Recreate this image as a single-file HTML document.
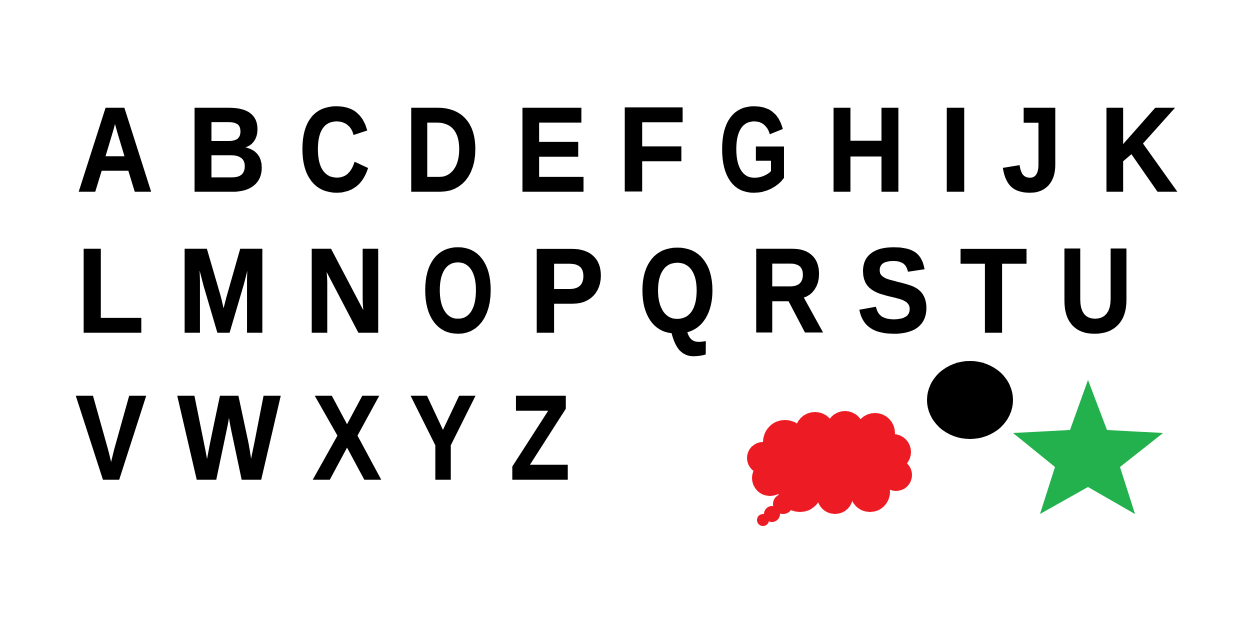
<!DOCTYPE html>
<html><head><style>
html,body{margin:0;padding:0;background:#fff;width:1260px;height:620px;overflow:hidden}
svg text{font-family:"Liberation Sans",sans-serif;font-weight:bold;font-size:120px;fill:#000;stroke:#000;stroke-width:1.5px}
</style></head><body>
<svg width="1260" height="620" viewBox="0 0 1260 620" xmlns="http://www.w3.org/2000/svg">
<g>
<text x="77" y="191" textLength="76" lengthAdjust="spacingAndGlyphs">A</text>
<text x="188" y="191" textLength="78" lengthAdjust="spacingAndGlyphs">B</text>
<text x="299" y="191" textLength="71" lengthAdjust="spacingAndGlyphs">C</text>
<text x="405" y="191" textLength="74" lengthAdjust="spacingAndGlyphs">D</text>
<text x="516" y="191" textLength="71" lengthAdjust="spacingAndGlyphs">E</text>
<text x="618" y="191" textLength="68" lengthAdjust="spacingAndGlyphs">F</text>
<text x="719" y="191" textLength="70" lengthAdjust="spacingAndGlyphs">G</text>
<text x="827" y="191" textLength="78" lengthAdjust="spacingAndGlyphs">H</text>
<text x="940" y="191" textLength="31" lengthAdjust="spacingAndGlyphs">I</text>
<text x="1002" y="191" textLength="60" lengthAdjust="spacingAndGlyphs">J</text>
<text x="1100" y="191" textLength="77" lengthAdjust="spacingAndGlyphs">K</text>

<text x="77" y="332" textLength="67" lengthAdjust="spacingAndGlyphs">L</text>
<text x="178" y="332" textLength="91" lengthAdjust="spacingAndGlyphs">M</text>
<text x="305" y="332" textLength="80" lengthAdjust="spacingAndGlyphs">N</text>
<text x="422" y="332" textLength="72" lengthAdjust="spacingAndGlyphs">O</text>
<text x="530" y="332" textLength="74" lengthAdjust="spacingAndGlyphs">P</text>
<text x="639" y="332" textLength="77" lengthAdjust="spacingAndGlyphs">Q</text>
<text x="750" y="332" textLength="74" lengthAdjust="spacingAndGlyphs">R</text>
<text x="857" y="332" textLength="73" lengthAdjust="spacingAndGlyphs">S</text>
<text x="960" y="332" textLength="67" lengthAdjust="spacingAndGlyphs">T</text>
<text x="1059" y="332" textLength="73" lengthAdjust="spacingAndGlyphs">U</text>

<text x="76" y="479" textLength="70" lengthAdjust="spacingAndGlyphs">V</text>
<text x="178" y="479" textLength="102" lengthAdjust="spacingAndGlyphs">W</text>
<text x="313" y="479" textLength="68" lengthAdjust="spacingAndGlyphs">X</text>
<text x="410" y="479" textLength="66" lengthAdjust="spacingAndGlyphs">Y</text>
<text x="510" y="479" textLength="60" lengthAdjust="spacingAndGlyphs">Z</text>
</g>
<g fill="#ed1c24">
<ellipse cx="830" cy="462" rx="72" ry="38"/>
<circle cx="785" cy="442" r="22"/>
<circle cx="815" cy="432" r="20"/>
<circle cx="845" cy="430" r="19"/>
<circle cx="875" cy="433" r="20"/>
<circle cx="893" cy="452" r="18"/>
<circle cx="896" cy="475" r="16"/>
<circle cx="870" cy="492" r="20"/>
<circle cx="835" cy="496" r="18"/>
<circle cx="800" cy="490" r="22"/>
<circle cx="770" cy="478" r="18"/>
<circle cx="763" cy="458" r="16"/>
<circle cx="783" cy="504" r="10"/>
<circle cx="772" cy="514" r="8"/>
<circle cx="763" cy="520" r="6"/>
</g>
<ellipse cx="970" cy="400" rx="43" ry="39" fill="#000"/>
<polygon fill="#22b14c" points="1088,380 1107,430 1163,433 1120,467 1135,514 1088,487 1040,514 1055,467 1013,433 1070,430"/>
</svg>
</body></html>
